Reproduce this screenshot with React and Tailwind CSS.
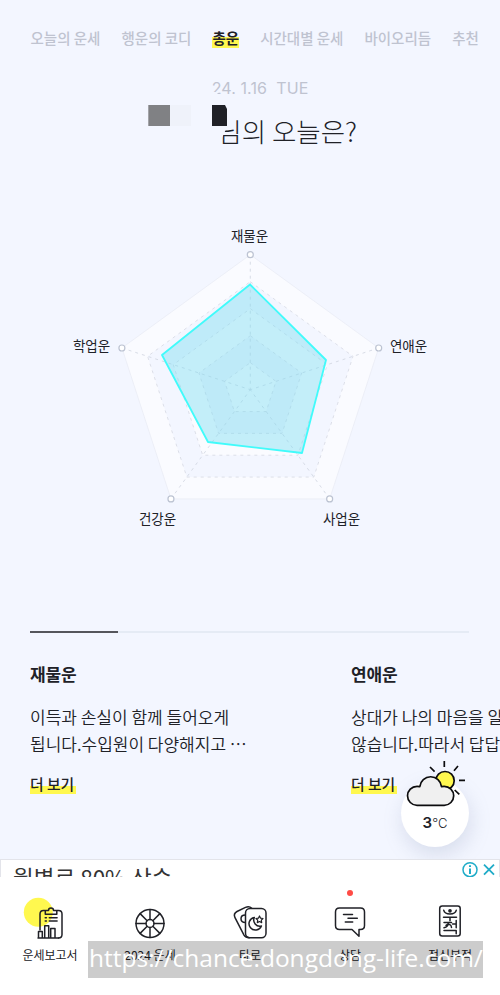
const FONT = "font-['Noto_Sans_CJK_KR',sans-serif]";

const tabs = ["오늘의 운세", "행운의 코디", "총운", "시간대별 운세", "바이오리듬", "추천"];

// RADAR
const CX = 250.3;
const CY = 164.7;
const angles = [-90, -18, 54, 126, 198];

const point = (r, i) => {
  const a = (angles[i] * Math.PI) / 180;
  return [CX + r * Math.cos(a), CY + r * Math.sin(a)];
};

const ring = (r) => angles.map((_, i) => point(r, i).join(",")).join(" ");

const rings = [
  { r: 135, fill: "#fafbff" },
  { r: 108, fill: "#f3f6ff" },
  { r: 81, fill: "#fafbff" },
  { r: 54, fill: "#f1f4fd" },
  { r: 27, fill: "#fafbff" },
];

function Radar() {
  return (
    <div className="relative h-[320px] w-[500px] text-[13.5px] leading-5 tracking-[-0.1px] text-[#202127]">
      <svg width="500" height="320" viewBox="0 0 500 320">
        {rings.map(({ r, fill }, i) => (
          <polygon
            key={r}
            points={ring(r)}
            fill={fill}
            stroke={i === 0 ? "#eaecf5" : "#d5d8e2"}
            strokeWidth="0.8"
            strokeDasharray={i === 0 ? undefined : "3 4"}
          />
        ))}
        {angles.map((a, i) => {
          const [x, y] = point(135, i);
          return (
            <line key={a} x1={x} y1={y} x2={CX} y2={CY} stroke="#cfd4df" strokeWidth="0.8" strokeDasharray="3 4" />
          );
        })}
        <polygon
          points="250,59.500 326,135 302,228 208,217 162,130"
          fill="#78dcf0"
          fillOpacity="0.42"
          stroke="#41fbfb"
          strokeWidth="1.8"
          strokeLinejoin="round"
        />
        {angles.map((a, i) => {
          const [x, y] = point(135, i);
          return <circle key={a} cx={x} cy={y} r="3" fill="#fff" stroke="#bcc3d2" strokeWidth="1.2" />;
        })}
      </svg>
      <span className="absolute left-[231px] top-0">재물운</span>
      <span className="absolute left-[390px] top-[110px]">연애운</span>
      <span className="absolute left-[323px] top-[283px]">사업운</span>
      <span className="absolute left-[139px] top-[283px]">건강운</span>
      <span className="absolute left-[73px] top-[110px]">학업운</span>
    </div>
  );
}

function Card({ title, lines }) {
  return (
    <div className="w-[291px] shrink-0 whitespace-nowrap">
      <h2 className="text-[17px] font-bold leading-[26px] tracking-[-0.2px]">{title}</h2>
      <p className="mt-[17px] text-[17px] font-[350] leading-[26.5px]">
        {lines[0]}
        <br />
        {lines[1]}
      </p>
      <span className="mt-[17px] inline-block bg-linear-to-t from-[#fff84f] from-40% to-transparent to-40% pr-[2px] text-[14.8px] font-medium leading-[20px]">
        더 보기
      </span>
    </div>
  );
}

// ICONOS DEL MENU
const ReportIcon = () => (
  <>
    <circle cx="18.3" cy="9.3" r="14.5" fill="#fff84f" stroke="none" />
    <path d="M20 27V11q0-3.5 3.500-3.500H25M37 7.500h1.500q3.500 0 3.500 3.500V31.500q0 3.500-3.500 3.500" />
    <path d="M18.500 35v-6.500h3.800V35M24.700 35V22.700h4V35M30.700 35v-9.500h4.300V35M18 35h20.500" />
    <path d="M25.300 11.300V8q0-.6.6-.6H28.500a2.500 2.500 0 0 1 5 0H36.200q.6 0 .6.6v3.300z" />
    <path d="M25.200 14.700h1.200M29.300 14.700h7.800M25.200 18h1.200M29.300 18h7.800" />
  </>
);

const WheelIcon = () => (
  <>
    <circle cx="30" cy="20.500" r="14" />
    <circle cx="30" cy="20.500" r="4" />
    {[0, 45, 90, 135, 180, 225, 270, 315].map((a) => (
      <path key={a} d="M30 16.500V6.500" transform={`rotate(${a} 30 20.500)`} />
    ))}
  </>
);

const TarotIcon = () => (
  <>
    <path d="M31.700 5.300C30 3.500 28 3.300 25.500 4.400L17 8.500C14.300 10 13.700 12 15 14.600L24 32.200Q25.500 34.700 29.300 34.700" />
    <path d="M25.300 12q-4.300 0-4.300 3.700t4.300 3.700" />
    <rect x="25.500" y="5.500" width="20.500" height="29.200" rx="4.500" />
    <path d="M34.300 14.400a6.400 6.400 0 1 0 7.100 8.600a6.200 6.200 0 0 1-7.100-8.600z" />
    <path d="M39.500 13l1.100 2.200 2.400.3-1.700 1.700.4 2.400-2.200-1.100-2.200 1.100.4-2.400-1.700-1.700 2.400-.3z" strokeWidth="1.200" />
  </>
);

const ChatIcon = () => (
  <>
    <path d="M19.500 5h21q4 0 4 4v13.500q0 4-4 4H39v6.700l-7-6.700H19.500q-4 0-4-4V9q0-4 4-4z" />
    <path d="M23.500 11.500h9M28 15.300h9.300M25.300 18.900h7.400" />
  </>
);

const CharmIcon = () => (
  <>
    <rect x="19.700" y="3" width="20.500" height="30" rx="2.500" />
    <circle cx="30" cy="7.800" r="1.100" fill="#202127" />
    <path d="M23.700 7.200c1.200 5.200 11.400 5.200 12.600 0M23.500 14.300h13M30 14.300v3.500" />
    <path d="M24 19.500h7.500M28.300 19.500c0 3-1.800 4.800-4.300 5.300M26 22.300c3-2 5.500-.5 5.500 2.300M36.200 17.500v7.300M32.500 21h3.500M24 27.500h12.200v3.300" />
  </>
);

const menu = [
  { label: "운세보고서", Icon: ReportIcon },
  { label: "2024 운세", Icon: WheelIcon },
  { label: "타로", Icon: TarotIcon },
  { label: "상담", Icon: ChatIcon, dot: true },
  { label: "점신부적", Icon: CharmIcon },
];

function Weather() {
  return (
    <div className="absolute left-[401px] top-[779px] h-[68px] w-[68px] rounded-full bg-white shadow-[2px_8px_20px_rgba(120,130,170,0.22)]">
      <svg
        className="absolute -left-px -top-6"
        width="70"
        height="55"
        viewBox="0 0 70 55"
        fill="none"
        stroke="#0c0c0e"
        strokeWidth="1.7"
      >
        <circle cx="45" cy="25.700" r="9.200" fill="#fff84f" />
        <path d="M44.300 6v6M58 11l-4 4.700M59 25.300h6M54.700 35l4.600 4.400M30 12l4.600 4.600" />
        <path
          d="M17 50.300a9.500 9.500 0 0 1 0-19q1.500 0 2.800.3a10.900 10.900 0 0 1 21.700 0q1.300-.3 2.700-.3a9.500 9.500 0 0 1 0 19z"
          fill="#f0f0f0"
          strokeLinejoin="round"
        />
      </svg>
      <div className="flex items-baseline justify-center pt-[34px] font-['Inter'] leading-5">
        <b className="text-[15px] font-semibold">3</b>
        <span className="text-[13px] font-light">°C</span>
      </div>
    </div>
  );
}

export default function App() {
  return (
    <div className={`relative flex h-[995px] w-[500px] flex-col overflow-hidden bg-[#f3f6ff] text-[#202127] ${FONT}`}>
      {/* TABS */}
      <nav className="flex gap-[21px] whitespace-nowrap pl-[30.500px] pt-[28px] text-[14.5px] font-medium leading-5 text-[#bfc3d0]">
        {tabs.map((t) => (
          <span
            key={t}
            className={
              t === "총운"
                ? "bg-linear-to-t from-[#fff84f] from-55% to-transparent to-55% font-bold text-[#202127]"
                : ""
            }
          >
            {t}
          </span>
        ))}
      </nav>

      {/* TITULO */}
      <header className="relative mt-[27px] h-[150px] text-center">
        <p className="whitespace-pre pt-px font-['Inter'] text-[16px] leading-6 tracking-[0.1px] text-[#bfc3d0]">2024. 1.16  TUE</p>
        <h1 className="mr-[143px] mt-[12px] whitespace-nowrap text-right text-[26.500px] font-light leading-[38px]">
          님의 오늘은?
        </h1>
        <svg className="absolute left-[140px] top-0" width="100" height="90" viewBox="140 75 100 90">
          <path d="M140 75H212V92H219L214 97H212V105H227V127L221 140V165H140z" fill="#f3f6ff" />
          <path d="M148.300 105H170V126H148.300z" fill="#808184" />
          <path d="M170 105h21v21h-21z" fill="#eff2fa" />
          <path d="M212 105h13l2 4v17h-15z" fill="#202127" />
        </svg>
      </header>

      <Radar />

      {/* BARRA DE PROGRESO */}
      <div className="ml-[30px] mt-[86px] h-[2px] w-[439px] shrink-0 bg-[#e5ebf5]">
        <div className="h-full w-[88px] bg-[#55565c]" />
      </div>

      <section className="ml-[30px] mt-[28px] flex gap-[30px]">
        <Card title="재물운" lines={["이득과 손실이 함께 들어오게", "됩니다.수입원이 다양해지고 ⋯"]} />
        <Card title="연애운" lines={["상대가 나의 마음을 알아주지", "않습니다.따라서 답답한 마음이"]} />
      </section>

      <Weather />

      {/* PUBLICIDAD */}
      <footer className="absolute inset-x-0 bottom-0 h-[136px] bg-white">
        <div className="flex h-[18px] justify-between overflow-hidden border border-b-0 border-[#e3e4ea]">
          <span className="pl-[12px] pt-[2px] text-[22.500px] leading-[30px] text-[#333]">월별로 80% 상승</span>
          <svg width="38" height="19" viewBox="0 0 38 19" fill="none" stroke="#20acc8" strokeWidth="1.500">
            <circle cx="9" cy="9.700" r="7" />
            <path d="M9 8.500v5.500M9 5.300v1.800" strokeWidth="2" />
            <path d="M23 4.700l10 10M33 4.700l-10 10" strokeWidth="1.800" />
          </svg>
        </div>
        <nav className="grid grid-cols-5">
          {menu.map(({ label, Icon, dot }) => (
            <div key={label} className="relative flex flex-col items-center pt-[26px]">
              {dot && <i className="absolute top-[13px] size-[6px] rounded-full bg-[#ff4b45]" />}
              <svg
                width="60"
                height="38"
                viewBox="0 0 60 38"
                className="overflow-visible"
                fill="none"
                stroke="#202127"
                strokeWidth="1.500"
                strokeLinecap="round"
                strokeLinejoin="round"
              >
                <Icon />
              </svg>
              <span className="mt-[5px] text-[12px] leading-[18px]">{label}</span>
            </div>
          ))}
        </nav>
      </footer>

      {/* URL */}
      <div className="absolute left-[88px] top-[941px] h-[37px] w-[395px] whitespace-nowrap bg-black/20 pl-px font-['Open_Sans'] text-[24.500px] leading-[34px] text-white">
        https://chance.dongdong-life.com/
      </div>
    </div>
  );
}
